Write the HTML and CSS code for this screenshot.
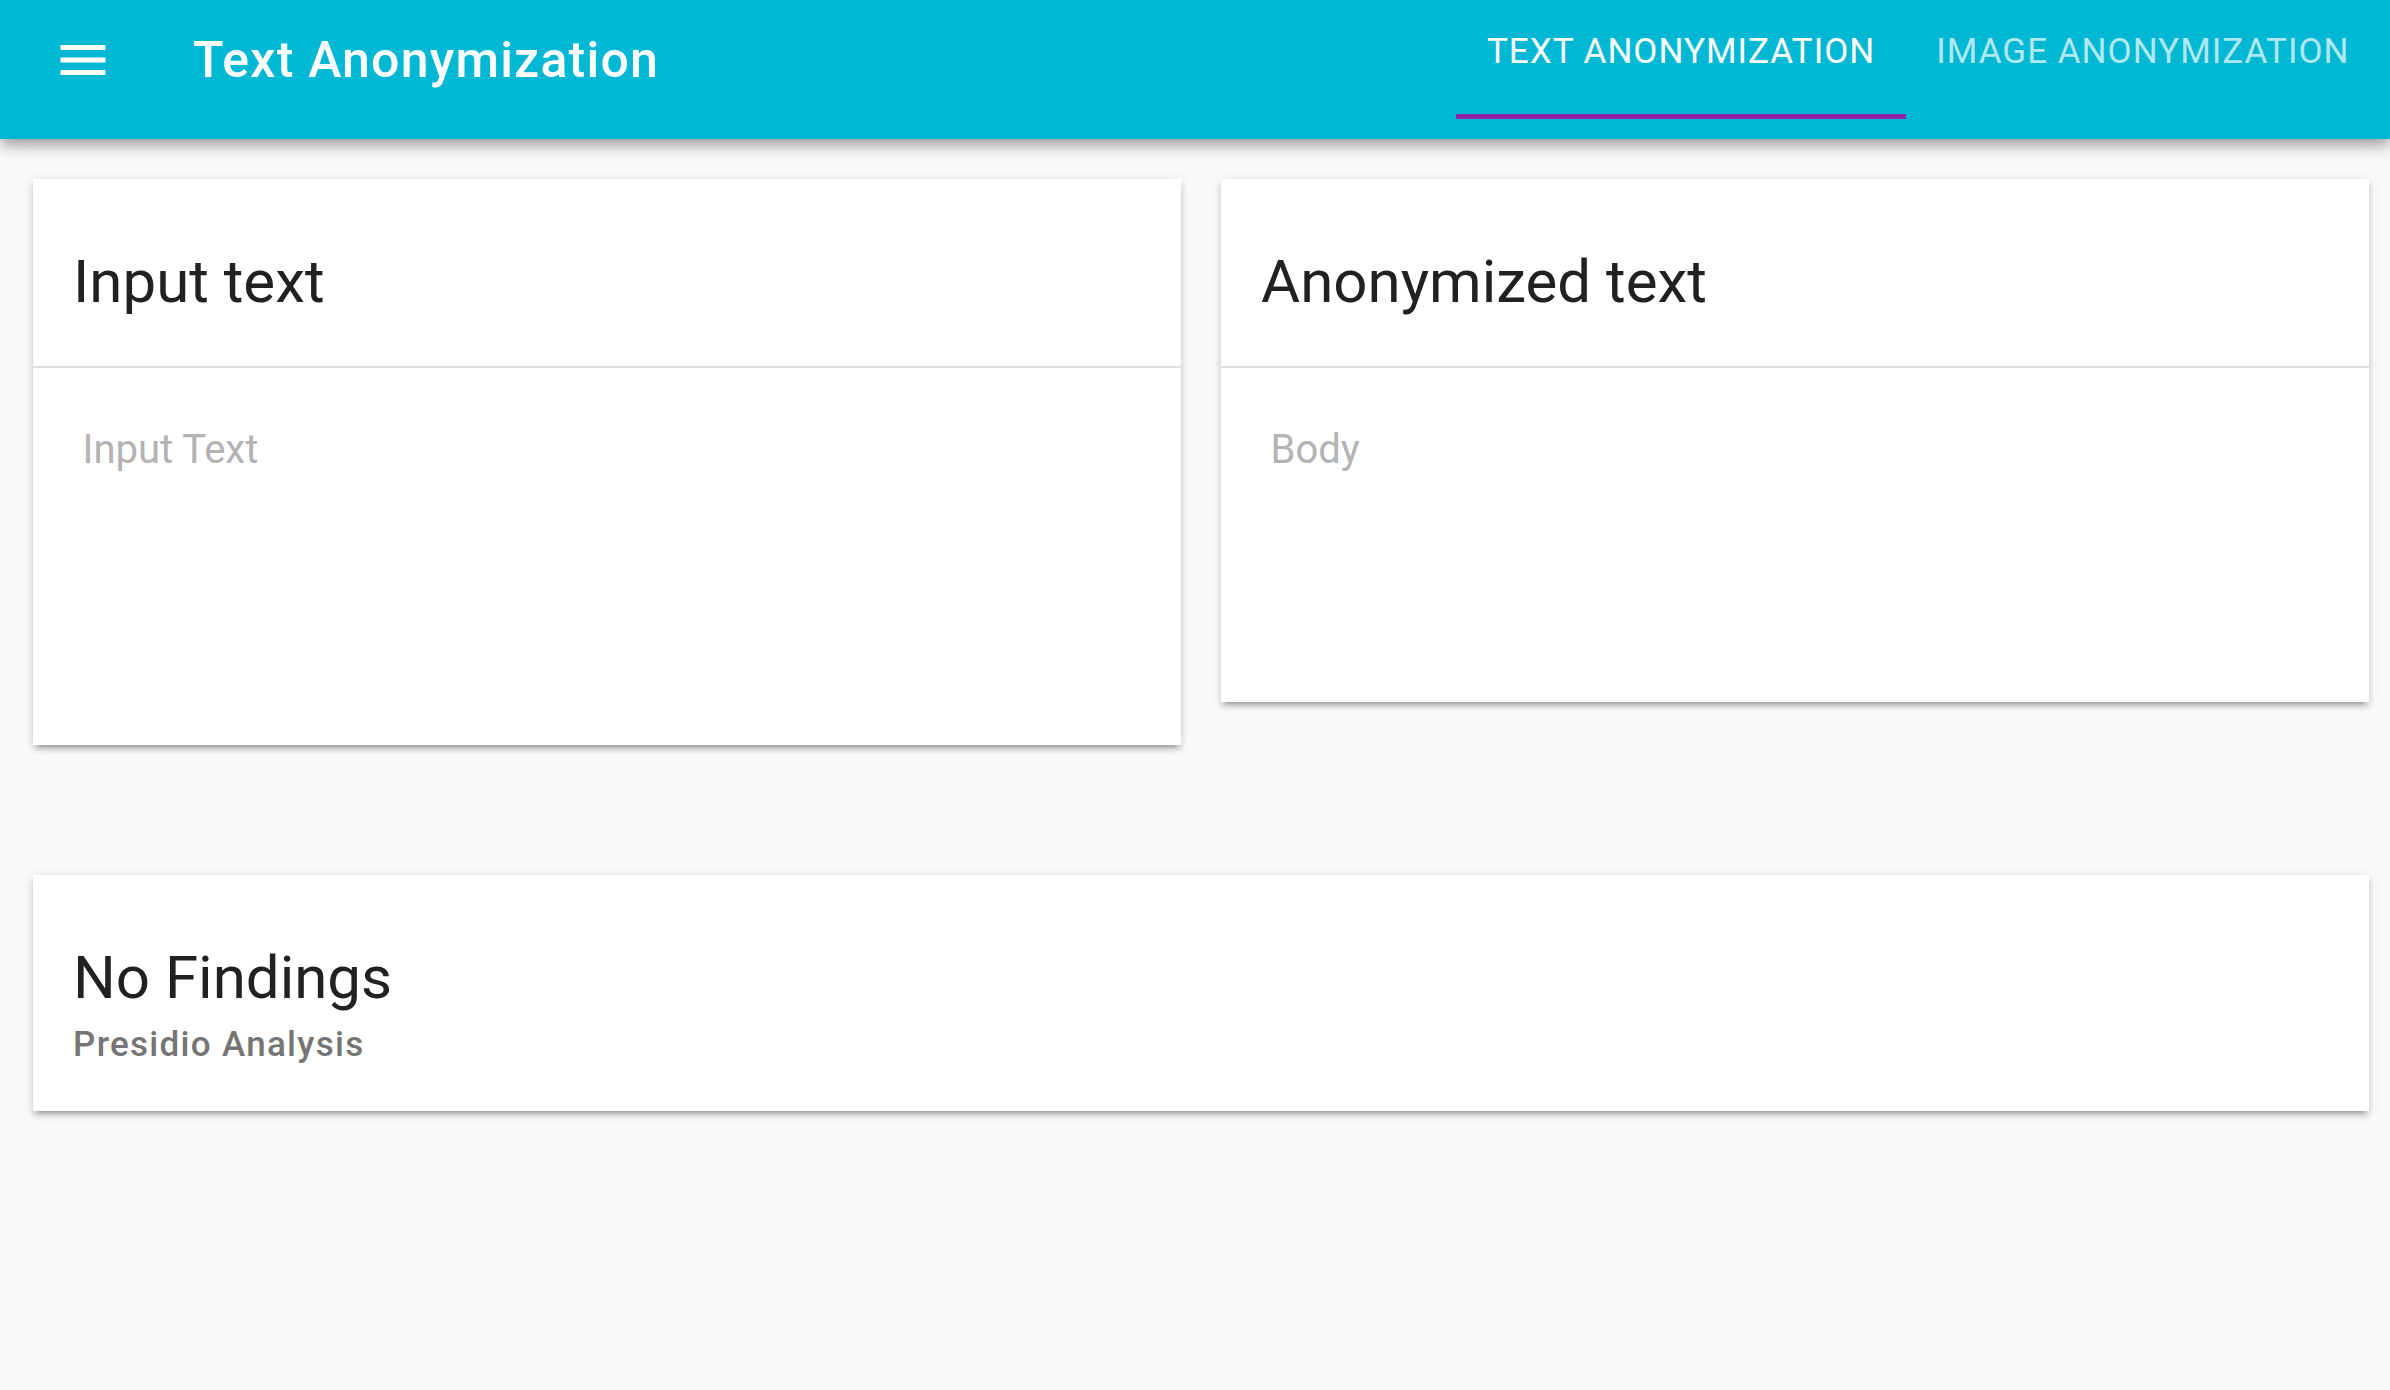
FILE: index.html
```html
<!DOCTYPE html>
<html lang="en">
<head>
<meta charset="utf-8">
<title>Text Anonymization</title>
<link rel="stylesheet" href="styles.css">
</head>
<body>
<header class="appbar">
  <div class="brand">
    <button class="menu-btn" aria-label="Menu">
      <svg viewBox="0 0 24 24" width="60" height="60"><path fill="#fff" d="M3 18h18v-2H3v2zm0-5h18v-2H3v2zm0-7v2h18V6H3z"/></svg>
    </button>
    <h1 class="app-title">Text Anonymization</h1>
  </div>
  <nav class="tabs">
    <a class="tab active">TEXT ANONYMIZATION</a>
    <a class="tab">IMAGE ANONYMIZATION</a>
  </nav>
</header>
<main class="content">
  <div class="row">
    <section class="card">
      <div class="card-title">Input text</div>
      <div class="card-body">
        <textarea class="input-area" placeholder="Input Text"></textarea>
      </div>
    </section>
    <section class="card">
      <div class="card-title">Anonymized text</div>
      <div class="card-body">
        <div class="output-area">Body</div>
      </div>
    </section>
  </div>
  <section class="card findings">
    <div class="findings-title">No Findings</div>
    <div class="findings-sub">Presidio Analysis</div>
  </section>
</main>
</body>
</html>
```

FILE: styles.css
```css
html, body {
  margin: 0;
  padding: 0;
}
body {
  background: #fafafa;
  font-family: Roboto, "Noto Sans", "Liberation Sans", sans-serif;
  color: #212121;
  width: 2390px;
  height: 1390px;
  overflow: hidden;
}
.appbar {
  position: relative;
  z-index: 2;
  display: flex;
  align-items: flex-start;
  height: 139px;
  background: #00b8d4;
  box-shadow: 0 5px 10px -2px rgba(0,0,0,.2), 0 10px 12px 0 rgba(0,0,0,.14), 0 3px 25px 0 rgba(0,0,0,.12);
}
.brand {
  display: flex;
  align-items: center;
  padding: 29px 0 0 53px;
}
.menu-btn {
  display: block;
  width: 60px;
  height: 60px;
  padding: 0;
  margin: 0;
  border: 0;
  background: none;
}
.menu-btn svg {
  display: block;
}
.app-title {
  margin: 1px 0 0 80px;
  font-size: 50px;
  line-height: 60px;
  font-weight: 500;
  color: #fff;
  letter-spacing: 1.2px;
}
.tabs {
  margin-left: auto;
  margin-right: 10px;
  display: flex;
}
.tab {
  position: relative;
  box-sizing: border-box;
  height: 119px;
  padding: 31px 30.5px 0;
  font-size: 35px;
  line-height: 42px;
  font-weight: 400;
  letter-spacing: 1px;
  color: rgba(255,255,255,.7);
  white-space: nowrap;
}
.tab.active {
  color: #fff;
}
.tab.active::after {
  content: "";
  position: absolute;
  left: 0;
  right: 0;
  bottom: 0;
  height: 5px;
  background: #8e24aa;
}
.content {
  padding: 40px 21px 0 33px;
}
.row {
  display: grid;
  grid-template-columns: 1fr 1fr;
  column-gap: 40px;
  align-items: start;
}
.card {
  background: #fff;
  box-shadow: 0 7px 3px -5px rgba(0,0,0,.2), 0 5px 5px 0 rgba(0,0,0,.14), 0 2px 12px 0 rgba(0,0,0,.12);
}
.card-title {
  padding: 67px 40px 47.5px;
  font-size: 60px;
  line-height: 72px;
  font-weight: 400;
  border-bottom: 2px solid #e0e0e0;
}
.card-body {
  padding: 52px 48px 0 49.5px;
}
.input-area {
  display: block;
  box-sizing: border-box;
  width: 100%;
  height: 325px;
  margin: 0;
  padding: 0;
  border: 0;
  outline: none;
  resize: none;
  background: transparent;
  font-family: inherit;
  font-size: 40px;
  line-height: 60px;
  color: #212121;
}
.input-area::placeholder {
  color: #b3b3b3;
  opacity: 1;
}
.output-area {
  height: 282.5px;
  font-size: 40px;
  line-height: 60px;
  color: #b3b3b3;
}
.findings {
  margin-top: 130px;
  padding: 67px 40px 45px;
}
.findings-title {
  font-size: 60px;
  line-height: 72px;
}
.findings-sub {
  margin-top: 10px;
  font-size: 35px;
  line-height: 42px;
  font-weight: 500;
  color: #757575;
  letter-spacing: 1.3px;
}
```
